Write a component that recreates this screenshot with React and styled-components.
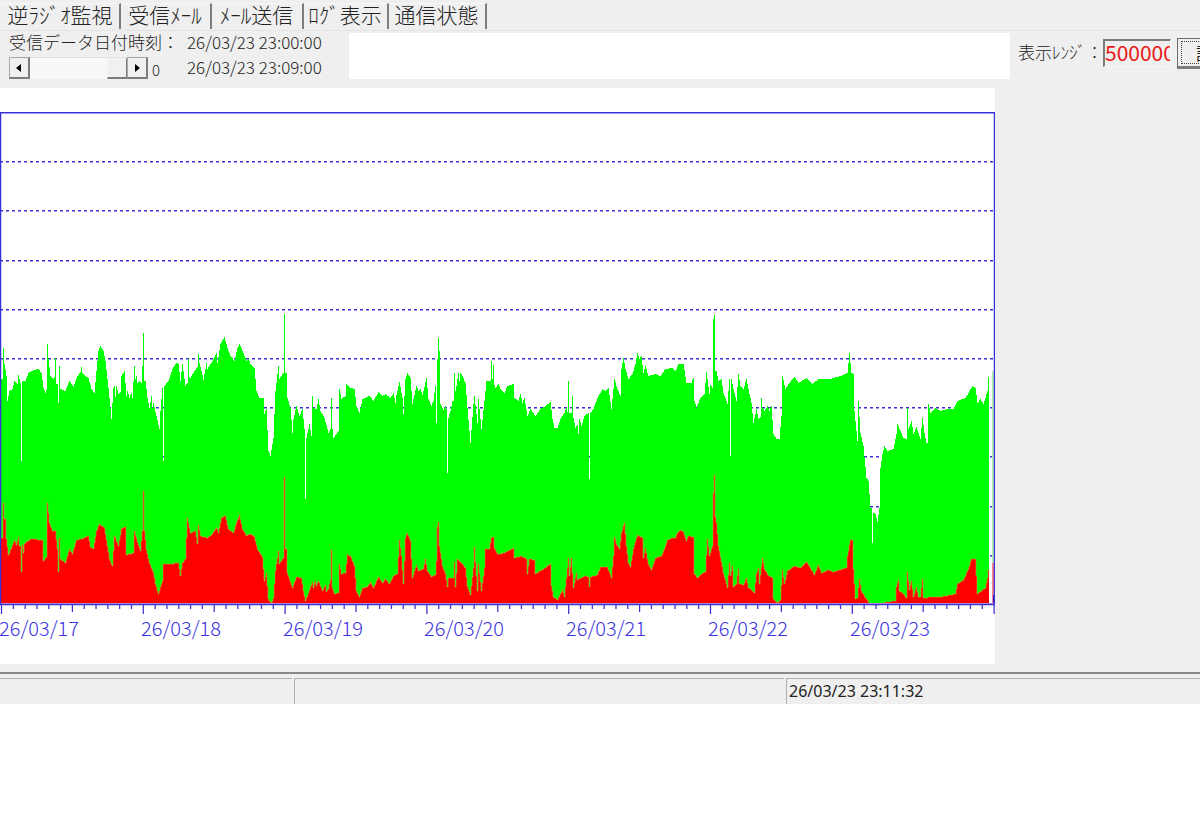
import React, { useState } from 'react'
import styled, { createGlobalStyle } from 'styled-components'

const tabs = [
  { title: '逆ﾗｼﾞｵ監視', width: 119 },
  { title: '受信ﾒｰﾙ', width: 91 },
  { title: 'ﾒｰﾙ送信', width: 92 },
  { title: 'ﾛｸﾞ表示', width: 85 },
  { title: '通信状態', width: 98 },
]

const days = ['17', '18', '19', '20', '21', '22', '23']

// x,height pairs, measured from the base line of the chart
const maxLevels = `0,226 2,226 3,257 4,241 6,229 7,204 9,214 12,216 14,224 17,221 18,230 20,222 21,144 22,224
25,224 28,232 33,235 38,236 41,232 43,217 45,212 46,215 47,261 48,246 50,229 53,226 54,228 55,247 56,221 57,221 58,202
59,239 60,216 65,214 69,224 73,218 76,227 80,233 81,238 82,232 85,229 88,227 91,216 94,212 96,234 98,254 100,259
103,254 105,244 107,226 109,207 111,186 113,217 114,219 115,208 116,219 118,211 120,213 121,229 124,234 126,209 127,214 129,207 131,212 132,207
134,239 135,226 136,229 137,222 139,224 141,222 142,239 143,272 144,224 145,224 147,207 149,197 151,209 152,197 153,202 156,189 159,176
160,194 162,217 163,144 164,219 168,224 172,236 176,242 178,241 180,224 182,241 185,219 187,222 188,246 189,228 190,227
194,234 197,238 198,251 199,242 201,234 203,225 206,242 207,236 212,244 216,252 217,242 220,261 224,268 227,257 230,249
234,244 237,257 239,261 243,252 246,244 248,246 250,241 254,237 256,214 259,207 263,207 264,191 266,196
268,154 270,149 273,167 275,214 278,239 279,226 283,232 284,291 285,232 286,232 287,207 290,197 292,172 293,186
296,199 299,189 302,196 304,176 305,106 306,167 309,181 311,169 312,209 313,197 316,196 318,206 320,194
324,187 328,172 330,176 331,207 332,176 333,167 338,174 339,216 341,206 345,209 346,221 350,217 354,216 356,199
359,192 362,206 369,209 373,204 378,213 382,209 385,211 390,207 393,212 395,202 396,210 399,223 402,207
403,191 405,226 407,232 410,227 412,201 416,219 418,214 420,216 422,210 424,218 426,227 428,206 431,199 433,204
435,219 436,182 437,246 438,267 439,254 440,201 443,195 445,199 446,196 447,132 448,187 450,194 452,204 453,204 454,232 455,214 456,219 458,232 459,224 460,232
462,229 465,222 467,197 470,162 473,201 474,209 477,182 478,206 481,176 484,204 486,224 489,224
490,224 491,244 492,226 493,240 494,220 495,217 498,221 500,216 504,212 507,219 513,221 514,207 518,204 520,211 522,202 524,207 527,189 530,196
535,189 540,196 545,199 550,203 552,186 554,177 557,177 560,186 564,192 566,197 567,193 568,224 569,192 571,192
572,209 573,187 575,177 577,180 578,171 579,186 581,179 584,189 588,192 589,126 590,192 593,196 597,207
602,216 605,214 608,217 611,196 614,226 617,216 620,209 621,236 623,247 625,236 628,226 632,231
635,241 637,252 639,246 641,249 642,240 643,232 645,239 648,229 655,231 660,229 665,236 672,237 675,234
678,241 683,241 686,222 691,222 693,227 694,204 696,197 700,207 704,211 706,233 709,211 710,220 712,217 713,286
714,290 715,234 716,234 718,224 721,226 723,212 727,201 729,226 730,149 731,226 733,216 736,204 738,231 740,219
743,216 746,226 749,211 751,202 753,182 756,196 758,186 760,188 761,207 762,197 764,194 767,199 769,194 771,199 773,171 776,166
779,166 781,189 782,229 785,216 788,221 794,228 798,222 806,227 812,221 818,226 830,226 843,230
847,232 849,252 851,232 853,231 854,194 857,164 858,204 860,172 863,159 866,127 868,124 870,97 871,97
872,62 873,92 875,91 877,83 879,97 880,137 882,151 884,159 887,154 893,156 896,171 897,181 900,174
903,167 906,166 907,197 908,176 911,184 913,171 916,178 920,166 922,187 924,172 926,162 927,162 928,201
930,192 935,197 940,194 947,196 953,196 957,204 965,207 972,219 975,217 977,202 980,206 983,201
985,207 987,214 988,228`

const avgLevels = `0,67 2,67 3,102 4,86 5,86 6,66 8,50 11,57 14,65 16,60 18,68 19,59 20,59 21,33 22,60 23,52 24,61 30,66 42,65 43,44
46,48 47,102 49,82 52,74 55,74 57,56 58,33 59,67 60,46 65,42 69,56 72,51 76,65 82,66 88,69 90,58 93,56
96,74 99,81 104,77 107,59 109,46 112,39 114,69 118,59 121,76 125,78 126,50 133,52 134,74 137,63
140,54 142,74 143,114 144,74 146,55 149,42 153,32 155,21 158,11 162,24 163,41 170,41 178,42 180,29
182,42 185,46 187,87 190,72 195,74 197,61 198,80 200,69 207,67 212,71 216,77 218,72 221,87 225,89
228,76 233,72 236,82 239,90 242,76 246,69 250,71 254,68 257,56 262,48 264,24 266,32 268,6 271,1
273,7 275,34 278,54 279,41 283,47 284,128 285,56 286,56 287,32 292,17 296,28 301,27 303,14 305,4 308,12
312,23 313,17 315,24 316,19 318,24 322,14 325,20 326,13 328,16 330,25 331,55 332,17 334,11 338,12 339,41 341,31 345,32 347,50
350,49 354,39 356,14 359,8 362,17 367,18 370,23 373,17 378,28 382,22 385,26 389,21 393,29 397,31
399,65 401,49 403,21 405,67 407,72 410,64 412,27 416,40 418,34 423,36 425,46 427,34 431,28 435,30
436,44 437,78 438,83 439,59 442,39 445,31 447,18 448,27 453,27 454,43 455,18 457,46 462,41 465,37 467,19
470,10 473,37 474,58 477,14 478,41 481,14 484,37 485,56 489,56 491,67 493,68 494,57 497,51 500,51 504,52
508,54 513,57 514,47 521,49 526,46 527,31 529,46 534,45 535,31 543,36 550,41 551,19 553,8 557,5
562,15 564,8 566,27 568,47 569,29 571,47 573,17 576,32 577,25 584,29 588,28 589,18 590,28 597,30
600,38 607,38 611,27 613,49 614,68 616,61 619,56 621,72 624,82 626,59 628,42 630,38 633,56 637,70
642,67 643,47 645,57 648,41 651,35 655,47 661,49 664,56 667,65 672,67 675,67 677,72 680,75 683,73
686,64 688,69 693,68 694,31 697,27 701,31 705,33 707,66 709,49 712,59 713,112 714,130 715,88 716,82 718,59
721,43 723,32 727,17 729,42 730,29 732,39 733,18 736,21 738,36 739,21 743,20 746,27 748,17 750,16
754,12 756,31 758,37 759,21 762,47 764,36 768,29 772,27 773,6 777,2 780,5 782,35 784,21 787,34
794,39 800,37 806,43 809,39 814,30 818,40 821,32 828,35 833,33 842,36 846,37 847,49 850,65 852,65
853,36 855,6 857,7 859,26 861,14 865,7 870,1 877,0 882,2 887,3 895,4 896,18 898,25 899,14 903,11
906,7 907,33 909,15 911,24 913,8 916,18 918,8 920,8 922,26 923,7 932,8 940,8 950,10 955,11 957,21
963,25 968,36 971,46 975,46 977,11 982,15 985,17 987,27 988,35`

const BASE = 517
const TOP = 25
const STEP = (BASE - TOP) / 10
const DAY = 141.8

// one flat step for each pixel column
const toSteps = (levels) => {
  const pairs = levels.split(/\s+/).map((pair) => pair.split(',').map(Number))
  const points = []
  for (let i = 0; i < pairs.length; i++) {
    const [x, h] = pairs[i]
    const [nextX, nextH] = pairs[i + 1] || [x + 1, h]
    for (let c = x; c < nextX; c++) {
      const y = BASE - Math.round(h + ((nextH - h) * (c - x)) / (nextX - x))
      points.push(`${c},${y} ${c + 1},${y}`)
    }
  }
  return points.join(' ')
}

const maxSteps = toSteps(maxLevels)
const avgSteps = toSteps(avgLevels)
const toArea = (steps) => `0,${BASE} ${steps} 989,${BASE}`

const LevelChart = () => {
  const lines = Array.from({ length: 9 }, (_, i) => Math.round(TOP + STEP * (i + 1)) - 0.25)
  const ticks = Array.from({ length: 85 }, (_, i) => i)
  return (
    <Chart viewBox='0 0 995 576' role='img' aria-label='受信レベル'>
      <g className='grid'>
        {lines.map((y) => (
          <line key={y} x1='0' x2='994' y1={y} y2={y} />
        ))}
      </g>
      <polygon className='max' points={toArea(maxSteps)} />
      <polygon className='avg' points={toArea(avgSteps)} />
      <polyline className='edge' points={avgSteps} />
      <rect x='992' y={BASE - 234} width='2' height='192' fill='#b4f0b4' />
      <rect x='992' y={BASE - 42} width='2' height='42' fill='#ff8090' />
      <rect x='993' y={BASE - 10} width='2' height='10' fill='#2a10c0' />
      <rect x='0' y={BASE - 2} width='994' height='1' fill='#d8a0d8' />
      <rect className='frame' x='0.5' y={TOP - 0.25} width='994' height={BASE - TOP - 0.25} />
      <g className='ticks'>
        {ticks.map((i) => {
          const x = 1.5 + (i * DAY) / 12
          const size = i % 12 === 0 ? 9 : i % 6 === 0 ? 7 : 4
          return <line key={i} x1={x} x2={x} y1={BASE} y2={BASE + size} />
        })}
      </g>
      {days.map((day, i) => (
        <text key={day} x={Math.round(i * DAY) - 1} y='548'>
          26/03/{day}
        </text>
      ))}
    </Chart>
  )
}

const App = () => {
  const [active, setActive] = useState(0)
  const [position, setPosition] = useState(100)
  const [range, setRange] = useState('5000000')

  return (
    <>
      <GlobalStyle />
      <Window>
        <TabStrip role='tablist'>
          {tabs.map((tab, i) => (
            <Tab
              key={tab.title}
              type='button'
              role='tab'
              $width={tab.width}
              aria-selected={active === i}
              onClick={() => setActive(i)}
            >
              {tab.title}
            </Tab>
          ))}
        </TabStrip>
        <Toolbar>
          <DateInfo>
            <label htmlFor='position'>受信データ日付時刻：</label>
            <time>26/03/23 23:00:00</time>
            <Scroll>
              <ScrollBar>
                <Arrow type='button' aria-label='前へ' onClick={() => setPosition(Math.max(0, position - 1))}>
                  <svg width='6' height='8' viewBox='0 0 6 8'>
                    <path d='M5 0v8L0 4z' />
                  </svg>
                </Arrow>
                <Track
                  id='position'
                  type='range'
                  min='0'
                  max='100'
                  value={position}
                  onChange={(e) => setPosition(Number(e.target.value))}
                />
                <Arrow type='button' aria-label='次へ' onClick={() => setPosition(Math.min(100, position + 1))}>
                  <svg width='6' height='8' viewBox='0 0 6 8'>
                    <path d='M1 0v8l5-4z' />
                  </svg>
                </Arrow>
              </ScrollBar>
              <Offset>{100 - position}</Offset>
            </Scroll>
            <time>26/03/23 23:09:00</time>
          </DateInfo>
          <Message />
          <RangeGroup>
            <RangeLabel htmlFor='range'>表示ﾚﾝｼﾞ：</RangeLabel>
            <RangeInput id='range' value={range} onChange={(e) => setRange(e.target.value)} />
            <SetButton type='button'>
              <span>設定</span>
            </SetButton>
          </RangeGroup>
        </Toolbar>
        <ChartPanel>
          <LevelChart />
        </ChartPanel>
        <StatusBar>
          <Pane />
          <Pane />
          <Pane>26/03/23 23:11:32</Pane>
        </StatusBar>
      </Window>
    </>
  )
}

const GlobalStyle = createGlobalStyle`
  * {
    box-sizing: border-box;
  }
  body {
    margin: 0;
    background: #fff;
    color: #222;
    font-family: 'Noto Sans CJK JP', sans-serif;
    font-size: 17px;
    font-weight: 300;
    overflow-x: hidden;
  }
  button,
  input {
    font: inherit;
    color: inherit;
    margin: 0;
    padding: 0;
    border-radius: 0;
  }
`

const Window = styled.main`
  background: #efefef;
`

const TabStrip = styled.div`
  display: flex;
  height: 31px;
  padding: 3px 0 1px 2px;
  border-bottom: 1px solid #e4e4e4;
`

const Tab = styled.button`
  width: ${(props) => props.$width}px;
  padding: 0 3px 4px 2px;
  border: none;
  border-top: 1px solid #f8f8f8;
  border-right: 2px solid #7c7c7c;
  background: none;
  font-size: 21px;
  line-height: 21px;
  white-space: nowrap;
`

const Toolbar = styled.div`
  display: flex;
  height: 57px;
`

const DateInfo = styled.div`
  display: grid;
  flex: none;
  grid-template-columns: 178px 162px;
  grid-template-rows: 22px 27px;
  align-content: start;
  align-items: center;
  padding-left: 9px;
  line-height: 22px;
  white-space: nowrap;
`

const Scroll = styled.div`
  display: flex;
  align-items: center;
  align-self: end;
  gap: 4px;
  height: 24px;
`

const ScrollBar = styled.div`
  display: flex;
  width: 139px;
  height: 22px;
`

const Arrow = styled.button`
  display: flex;
  flex: none;
  align-items: center;
  justify-content: center;
  width: 21px;
  background: #f0f0f0;
  border: 1px solid #a8a8a8;
  border-right: 2px solid #7c7c7c;
  border-bottom: 2px solid #7c7c7c;

  path {
    fill: #000;
  }
`

const Track = styled.input`
  appearance: none;
  flex: 1;
  min-width: 0;
  height: 22px;
  background: #f8f8f8;
  border-top: 1px solid #e0e0e0;

  &::-webkit-slider-thumb {
    appearance: none;
    width: 20px;
    height: 21px;
    background: #f0f0f0;
    border: 1px solid #f4f4f4;
    border-right: 1px solid #7c7c7c;
    border-bottom: 2px solid #7c7c7c;
  }
`

const Offset = styled.span`
  font-size: 15px;
  padding-top: 4px;
`

const Message = styled.div`
  flex: 1;
  margin: 2px 0 9px;
  background: #fff;
`

const RangeGroup = styled.div`
  display: flex;
  flex: none;
  align-items: center;
  width: 190px;
  padding: 0 0 13px 8px;
  overflow: hidden;
  white-space: nowrap;
`

const RangeLabel = styled.label`
  padding-bottom: 4px;
`

const RangeInput = styled.input`
  flex: none;
  width: 68px;
  height: 28px;
  padding: 0 0 4px;
  background: #efefef;
  border: 1px solid #f6f6f6;
  border-top: 2px solid #7c7c7c;
  border-left: 2px solid #7c7c7c;
  color: #e81818;
  font-size: 21px;
  font-weight: 400;
`

const SetButton = styled.button`
  flex: none;
  height: 31px;
  margin-left: 6px;
  padding: 2px 3px;
  background: #efefef;
  border: 1px solid #6c6c6c;
  border-bottom: 3px solid #7c7c7c;

  span {
    display: block;
    padding: 0 14px;
    border: 1px dotted #444;
    line-height: 21px;
    font-weight: 400;
  }
`

const ChartPanel = styled.section`
  padding: 0 205px 8px 0;
`

const Chart = styled.svg`
  display: block;
  width: 100%;
  height: auto;
  background: #fff;

  .grid line {
    stroke: #3a30d8;
    stroke-width: 1.5;
    stroke-dasharray: 3 3;
  }
  .max {
    fill: #0f0;
  }
  .avg {
    fill: #f00;
  }
  .edge {
    fill: none;
    stroke: #c8a040;
    stroke-opacity: 0.6;
  }
  .frame {
    fill: none;
    stroke: #3a30d8;
    stroke-width: 1.5;
  }
  .ticks line {
    stroke: #3a30d8;
    stroke-width: 1.25;
  }
  text {
    fill: #3a32e0;
    font-size: 20px;
  }
`

const StatusBar = styled.footer`
  display: grid;
  grid-template-columns: 292px 490px 1fr;
  gap: 2px;
  padding-top: 4px;
  border-top: 2px solid #888;
`

const Pane = styled.div`
  height: 26px;
  padding-left: 2px;
  border-top: 1px solid #b0b0b0;
  border-left: 1px solid #b0b0b0;
  font-family: 'Noto Sans', sans-serif;
  font-size: 16px;
  font-weight: 400;
  line-height: 24px;

  &:first-child {
    border-left: none;
  }
`

export default App
